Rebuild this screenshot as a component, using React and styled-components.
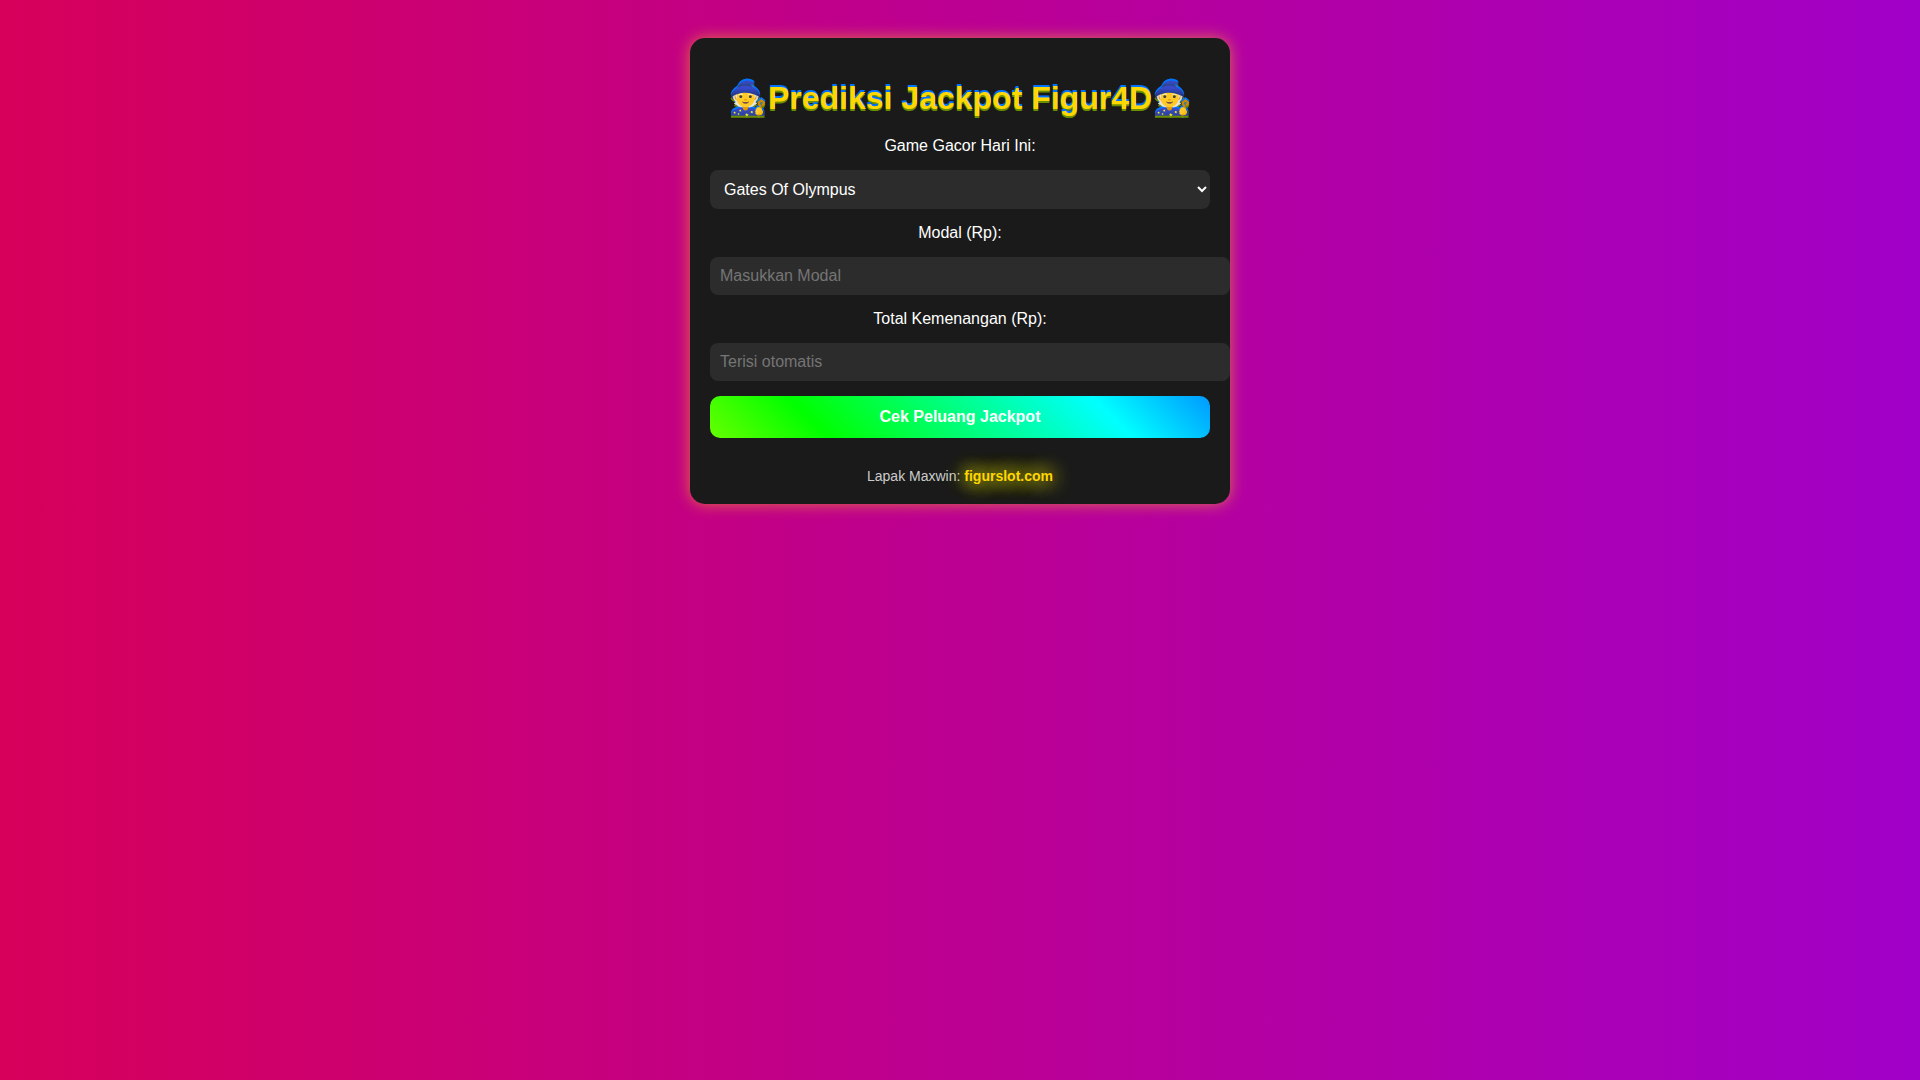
import React, { useState } from 'react';
import styled, { createGlobalStyle } from 'styled-components';

const GlobalStyle = createGlobalStyle`
  body {
    margin: 0;
    min-height: 100vh;
    font-family: "Liberation Sans", Arial, sans-serif;
    color: #fff;
    text-align: center;
    background: linear-gradient(90deg, #d7005a 0%, #bc0092 50%, #a100c8 100%);
  }
`;

const Card = styled.main`
  max-width: 500px;
  margin: 38px auto;
  padding: 20px;
  border-radius: 15px;
  background: #1a1a1a;
  box-shadow: 0 0 15px rgba(255, 215, 0, 0.5);
`;

const Title = styled.h1`
  margin: 20px 0 19px;
  font-size: 32px;
  line-height: 40px;
  color: #ffd700;
  text-shadow: 0 -2px #0073ff, 0 2px #6b8e00;
`;

const Form = styled.form`
  display: flex;
  flex-direction: column;
`;

const Label = styled.label`
  line-height: 18px;
`;

const Select = styled.select`
  width: 100%;
  margin: 15px 0;
  padding: 10px;
  border: none;
  border-radius: 8px;
  font-family: inherit;
  font-size: 16px;
  color: #fff;
  background: #2c2c2c;
`;

const Input = styled.input`
  box-sizing: content-box;
  width: 100%;
  margin: 15px 0;
  padding: 10px;
  border: none;
  border-radius: 8px;
  font-family: inherit;
  font-size: 16px;
  color: #fff;
  background: #2c2c2c;

  &::placeholder {
    color: #757575;
  }
`;

const Button = styled.button`
  padding: 12px;
  border: none;
  border-radius: 10px;
  font-family: inherit;
  font-size: 16px;
  font-weight: bold;
  color: #fff;
  background: linear-gradient(45deg, #66ff00 0%, #00ff00 22%, #00ffff 78%, #0099ff 100%);
  cursor: pointer;
`;

const Footer = styled.footer`
  margin-top: 30px;
  font-size: 14px;
  line-height: 16px;
  color: #ccc;
`;

const FooterLink = styled.a`
  font-weight: bold;
  text-decoration: none;
  color: #ffd700;
  text-shadow: 0 0 20px #ffee00, 0 0 20px #ffee00;
`;

const App = () => {
  const [modal, setModal] = useState('');

  return (
    <>
      <GlobalStyle />
      <Card>
        <Title>🧙Prediksi Jackpot Figur4D🧙</Title>
        <Form onSubmit={(e) => e.preventDefault()}>
          <Label htmlFor="game">Game Gacor Hari Ini:</Label>
          <Select id="game">
            <option>Gates Of Olympus</option>
          </Select>
          <Label htmlFor="modal">Modal (Rp):</Label>
          <Input
            id="modal"
            type="text"
            placeholder="Masukkan Modal"
            value={modal}
            onChange={(e) => setModal(e.target.value)}
          />
          <Label htmlFor="total">Total Kemenangan (Rp):</Label>
          <Input id="total" type="text" placeholder="Terisi otomatis" readOnly />
          <Button type="submit">Cek Peluang Jackpot</Button>
        </Form>
        <Footer>
          Lapak Maxwin: <FooterLink href="#figurslot">figurslot.com</FooterLink>
        </Footer>
      </Card>
    </>
  );
};

export default App;
